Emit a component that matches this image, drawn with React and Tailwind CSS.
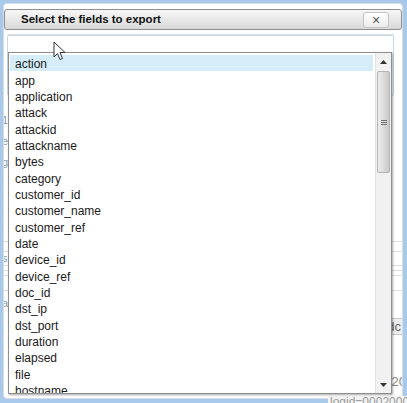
import React from "react";

const items = [
  "action","app","application","attack","attackid","attackname","bytes","category",
  "customer_id","customer_name","customer_ref","date","device_id","device_ref","doc_id",
  "dst_ip","dst_port","duration","elapsed","file","hostname",
];

const bgRows = [
  { h: 15, l: "", r: "", line: false },
  { h: 18, l: "1", r: "", line: false },
  { h: 24, l: "e", r: "", line: false },
  { h: 18, l: "g", r: "", line: false },
  { h: 71, l: "", r: "", line: true },
  { h: 10, l: "", r: "", line: true },
  { h: 14, l: "s", r: "", line: true },
  { h: 5, l: "", r: "", line: true },
  { h: 5, l: "", r: "", line: true },
  { h: 15, l: "", r: "", line: true },
  { h: 24, l: "a", r: "", line: false },
  { h: 22, l: "", r: "dc", line: false },
  { h: 35, l: "", r: "", line: false },
  { h: 20, l: "", r: "20", line: false },
];

export default function App() {
  return (
    <div
      className="relative w-[407px] h-[403px] overflow-hidden bg-[#a9c9ea] pt-[3px] pl-[3px]"
      style={{ fontFamily: '"Liberation Sans", Arial, sans-serif' }}
    >
      <div className="w-[400px] h-[396px] bg-white rounded-[4px] border border-[#d6dde6] overflow-hidden flex flex-col pt-[5px]">
        {/* title bar */}
        <div className="h-[21px] flex items-center justify-between rounded-[3px] border border-[#8e8e8e] bg-gradient-to-b from-[#f7f7f7] to-[#d9d9d9] pl-[16px] pr-[12px]">
          <span className="text-[11.5px] font-bold text-[#111] leading-none">Select the fields to export</span>
          <div className="w-[26px] h-[16px] rounded-[3px] border border-[#c4c4c4] bg-gradient-to-b from-white to-[#ececec] flex items-center justify-center text-[14px] text-[#555] leading-none">
            ×
          </div>
        </div>
        {/* input box */}
        <div className="mt-[4px] ml-[3px] mr-[8px] h-[62px] border-t border-t-[#dcdcdc]">
          <div className="h-full border border-[#c4d9ee] rounded-[2px] bg-white"></div>
        </div>
        {/* background rows */}
        <div className="flex flex-col text-[11px] text-[#8a9aa8]">
          {bgRows.map((row, i) => (
            <div
              key={i}
              className={`flex items-center justify-between -ml-[2px] pr-[2px] ${row.line ? "border-b border-[#dedede]" : ""}`}
              style={{ height: row.h }}
            >
              <span>{row.l}</span>
              {row.r === "dc" ? (
                <span className="h-[17px] px-[2px] border border-[#c8c8c8] bg-[#eeeeee] text-[13px] text-[#666] leading-[15px] -mr-[4px]">dc</span>
              ) : (
                <span className="text-[13px] text-[#888] -mr-[6px]">{row.r}</span>
              )}
            </div>
          ))}
        </div>
      </div>

      {/* bottom log fragment */}
      <div className="absolute left-[328px] top-[396px] w-[79px] h-[7px] bg-[#f4f4f4] overflow-hidden">
        <div className="text-[12px] leading-[12px] text-[#999] pl-[2px]">logid=0002000</div>
      </div>

      {/* dropdown list overlay */}
      <div className="absolute left-[8px] top-[52px] w-[384px] h-[342px] border border-[#8f8f8f] bg-white shadow-[1px_1px_2px_rgba(0,0,0,0.35)] flex">
        <div className="flex-1 overflow-hidden pl-[1px] pr-[2px] pt-[2px]">
          {items.map((it, i) => (
            <div
              key={it}
              className={`h-[16.35px] flex items-center pl-[5px] pt-[2px] text-[12px] text-[#1a1a1a] leading-none ${i === 0 ? "bg-[#d4edf9]" : ""}`}
            >
              {it}
            </div>
          ))}
        </div>
        {/* scrollbar */}
        <div className="w-[16px] h-full bg-[#f1f1f1] border-l border-[#e2e2e2] flex flex-col">
          <div className="h-[18px] flex items-center justify-center">
            <svg width="7" height="4" viewBox="0 0 7 4"><polygon points="3.5,0 7,4 0,4" fill="#333" /></svg>
          </div>
          <div className="mx-[1px] h-[102px] rounded-[2px] border border-[#b4b4b4] bg-gradient-to-r from-[#ececec] via-[#dcdcdc] to-[#c9c9c9] flex flex-col items-center justify-center gap-[1px]">
            <div className="w-[6px] h-[1px] bg-[#6f6f6f]"></div>
            <div className="w-[6px] h-[1px] bg-[#6f6f6f]"></div>
            <div className="w-[6px] h-[1px] bg-[#6f6f6f]"></div>
          </div>
          <div className="flex-1"></div>
          <div className="h-[16px] flex items-center justify-center">
            <svg width="7" height="4" viewBox="0 0 7 4"><polygon points="0,0 7,0 3.5,4" fill="#333" /></svg>
          </div>
        </div>
      </div>

      {/* mouse cursor */}
      <svg className="absolute left-[53px] top-[41px]" width="13" height="20" viewBox="0 0 13 20">
        <path d="M1 1 L1 16 L4.5 12.5 L7 18.5 L9.5 17.5 L7 11.5 L12 11.5 Z" fill="white" stroke="#333" strokeWidth="1" strokeLinejoin="round" />
      </svg>
    </div>
  );
}
